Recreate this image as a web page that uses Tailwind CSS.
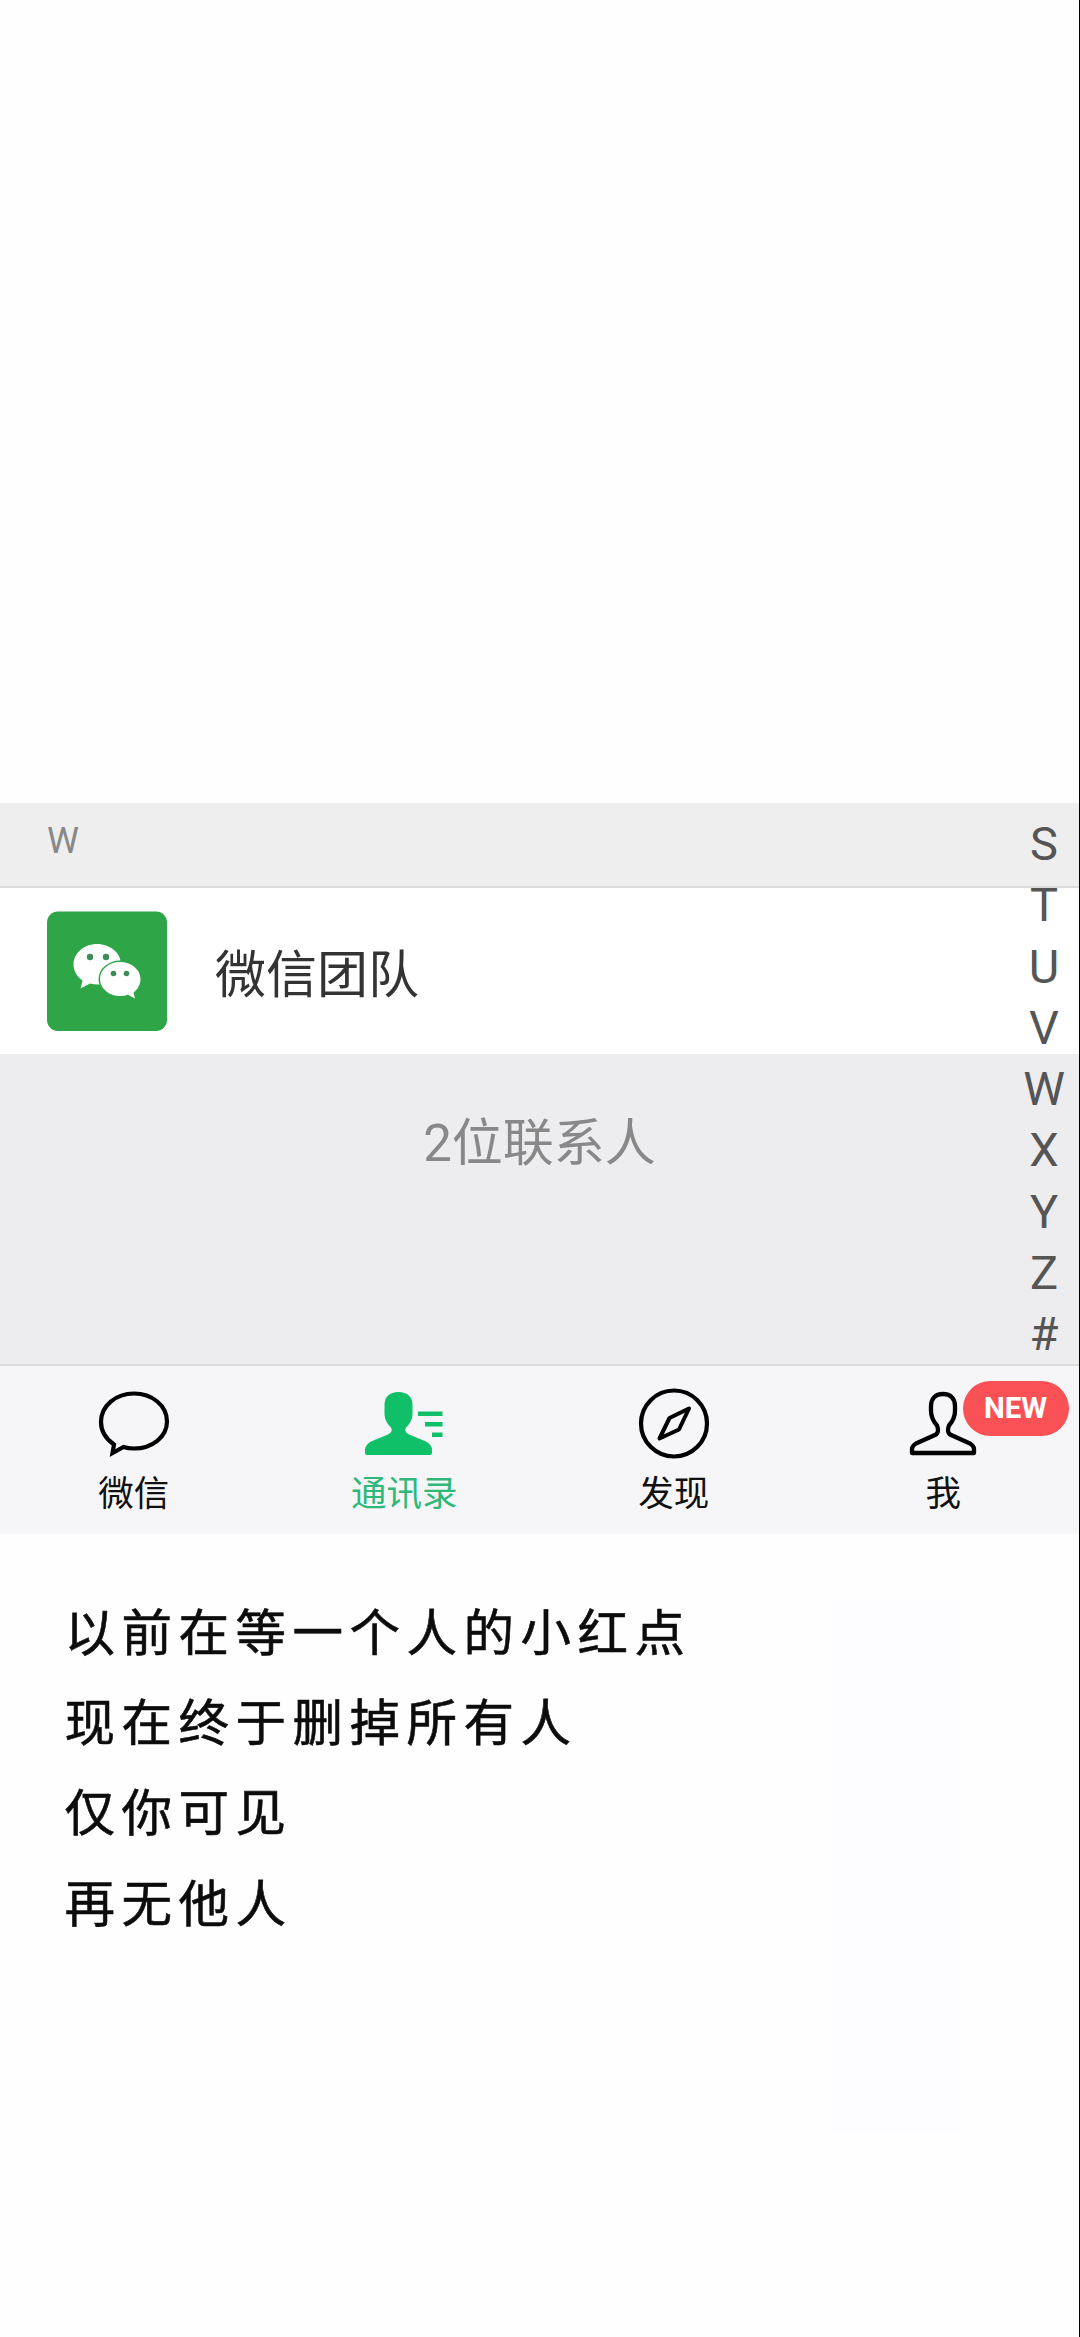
<!DOCTYPE html>
<html lang="zh-CN">
<head>
<meta charset="utf-8">
<title>通讯录</title>
<script src="https://cdn.jsdelivr.net/npm/@tailwindcss/browser@4"></script>
</head>
<body class="bg-[#fdfdfd]">
<div class="relative flex h-[2337px] w-[1080px] flex-col overflow-hidden border-r border-black bg-[#fefefe] pt-[803px] font-[Roboto,'Noto_Sans_CJK_SC',sans-serif]">
  <header class="flex h-[85px] shrink-0 items-center border-b-2 border-[#dcdcdc] bg-[#eeeeee] pb-2 pl-[47px] text-[36px] leading-none text-[#888]">W</header>
  <div class="flex h-[166px] shrink-0 items-center bg-white pl-[47px]">
    <svg class="size-[120px]" viewBox="0 0 120 120">
      <rect y="0.500" width="120" height="119.500" rx="11" fill="#2ea547"/>
      <path d="M50 33C37 33 26.500 42 26.500 53.500C26.500 60 30 65.500 35.500 69.500L33.500 77.500L43 72.500Q47 73.800 54 73.500C66 71 74 62 74 53C74 42 63 33 50 33Z" fill="#fff"/>
      <ellipse cx="73" cy="68" rx="21.500" ry="18.500" fill="#2ea547"/>
      <path d="M73 51C62 51 53 58.500 53 68C53 77.500 62 85 73 85Q77.500 85 81 83.800L88 87.500L86.500 81.500C91 78 93.500 73.500 93.500 68C93.500 58.500 84 51 73 51Z" fill="#fff"/>
      <g fill="#3d8c58"><circle cx="43" cy="46" r="3.200"/><circle cx="59" cy="46" r="3.200"/><circle cx="66.500" cy="62.500" r="2.800"/><circle cx="79.500" cy="62.500" r="2.800"/></g>
    </svg>
    <span class="ml-[48px] pt-[8px] text-[51px] leading-none text-[#333]">微信团队</span>
  </div>
  <div class="flex h-[312px] shrink-0 justify-center border-b-2 border-[#dcdcdc] bg-[#ededef] pt-[64px] text-[51px] leading-none text-[#888]">2位联系人</div>
  <nav class="grid h-[168px] shrink-0 grid-cols-4 bg-[#f6f6f8] pr-px pt-[19px] text-[35.500px] leading-none text-[#111]">
    <div class="flex flex-col items-center gap-[14px]">
      <svg class="h-[78px] w-[90px]" viewBox="0 0 90 78" fill="none" stroke="#000" stroke-width="4.200"><path d="M44 8.500C26 8.500 11 20.500 11 37C11 46 16 54 24 59.500L22.500 68L33.500 62Q38 63.500 44 63.500C62 63.500 77 52 77 36.500C77 20.500 62 8.500 44 8.500Z"/></svg>
      <span class="-ml-[2px]">微信</span>
    </div>
    <div class="flex flex-col items-center gap-[14px] text-[#2fb878]">
      <svg class="h-[78px] w-[90px]" viewBox="0 0 90 78" fill="#0fc068"><path d="M39.500 7C30.500 7 25.500 12 25.500 20V28C25.500 35 28.500 39 32 42.500Q34.500 46.500 29 49.500L12 56.500Q6 60 6 65V68Q6 70 8 70H71Q73 70 73 68V65Q73 60 67 56.500L50 49.500Q44.500 46.500 47 42.500C50.500 39 53.500 35 53.500 28V20C53.500 12 48.500 7 39.500 7Z"/><path d="M59 26.500h24.500v4.500H59zM66 37h17.500v4.500H66zM73 47.500h10.500v4.500H73z"/></svg>
      <span>通讯录</span>
    </div>
    <div class="flex flex-col items-center gap-[14px]">
      <svg class="h-[78px] w-[90px]" viewBox="0 0 90 78" fill="none" stroke="#000" stroke-width="4.200" stroke-linejoin="round"><circle cx="45" cy="38.500" r="33"/><path d="M60 23.500L50 44.500L30.500 53.500L40.500 33Z" stroke-width="4"/></svg>
      <span>发现</span>
    </div>
    <div class="relative flex flex-col items-center gap-[14px]">
      <svg class="h-[78px] w-[90px]" viewBox="0 0 90 78" fill="none" stroke="#000" stroke-width="4.300" stroke-linejoin="round"><path d="M45 9C37 9 33 14 33 21V26C33 32 35.500 36.500 39 40.500Q41.500 46.500 38 49.500L18 58.500Q14 61 14 64V68H76V64Q76 61 72 58.500L52 49.500Q48.500 46.500 51 40.500C54.500 36.500 57 32 57 26V21C57 14 53 9 45 9Z"/></svg>
      <span>我</span>
      <span class="absolute top-[-4px] left-[154px] flex h-[55px] w-[106px] items-center justify-center rounded-full bg-[#fa5157] text-[29.500px] font-bold text-white">NEW</span>
    </div>
  </nav>
  <main class="pt-[55px] pl-[64.500px] text-[50.500px] leading-[90.200px] tracking-[6.500px] text-[#0c0c0c] [-webkit-text-stroke:0.600px_#0c0c0c]">
    <p>以前在等一个人的小红点</p>
    <p>现在终于删掉所有人</p>
    <p>仅你可见</p>
    <p>再无他人</p>
  </main>
  <div class="absolute top-[1600px] left-[832px] h-[532px] w-[128px] bg-[#fdfcfe]"></div>
  <aside class="absolute top-[813px] right-[4px] flex w-[62px] flex-col items-center text-[47px] leading-[61.300px] text-[#555]"><span>S</span><span>T</span><span>U</span><span>V</span><span>W</span><span>X</span><span>Y</span><span>Z</span><span>#</span></aside>
</div>
</body>
</html>
